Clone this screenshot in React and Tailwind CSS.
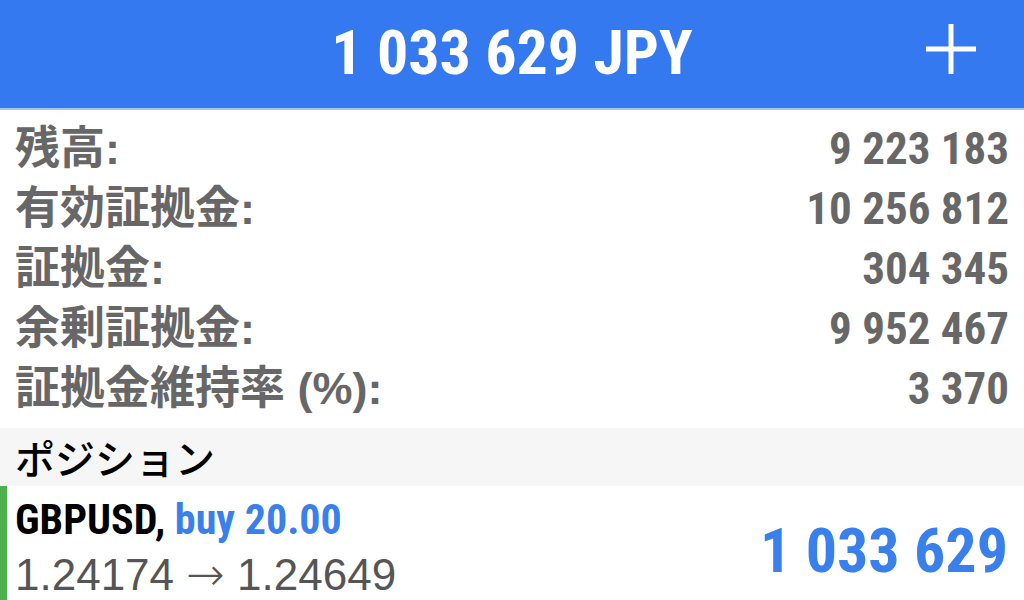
const rows = [
  { label: '残高:', value: '9 223 183' },
  { label: '有効証拠金:', value: '10 256 812' },
  { label: '証拠金:', value: '304 345' },
  { label: '余剰証拠金:', value: '9 952 467' },
  { label: '証拠金維持率 (%):', value: '3 370' },
];

const narrow = "font-['Roboto','Open_Sans',sans-serif] font-stretch-condensed";

function PlusIcon() {
  return (
    <svg width="54" height="54" viewBox="0 0 54 54" className="block">
      <line x1="27" y1="2" x2="27" y2="52" stroke="white" strokeWidth="5" />
      <line x1="2" y1="27" x2="52" y2="27" stroke="white" strokeWidth="5" />
    </svg>
  );
}

export default function App() {
  return (
    <div className="w-[1024px] h-[600px] overflow-hidden bg-white font-['Liberation_Sans','Noto_Sans_CJK_JP',sans-serif]">
      <header className="h-[110px] bg-[#3579f0] border-b-2 border-[#a9c3ef] grid grid-cols-[1fr_auto_1fr] items-center">
        <div />
        <h1 className={`${narrow} text-white font-bold text-[62px] leading-none pb-[2px]`}>1 033 629 JPY</h1>
        <div className="flex justify-end pr-[46px] pb-[10px]">
          <PlusIcon />
        </div>
      </header>

      <div className="pt-[8px] pb-[10px]">
        {rows.map((r) => (
          <div key={r.label} className="h-[60px] flex items-center justify-between pl-[15px] pr-[15px]">
            <span className="text-[45px] leading-none font-bold text-[#676767]">{r.label}</span>
            <span className={`${narrow} text-[45px] leading-none font-bold text-[#676767]`}>{r.value}</span>
          </div>
        ))}
      </div>

      <div className="h-[58px] bg-[#f6f6f6] flex items-center pl-[15px]">
        <span className="text-[40px] leading-none text-black font-['Noto_Sans_CJK_JP',sans-serif] font-medium">ポジション</span>
      </div>

      <div className="border-l-[7px] border-[#4caf50] h-[120px] flex items-center justify-between pl-[8px] pr-[16px]">
        <div className="flex flex-col gap-[10px] pt-[4px]">
          <div className={`${narrow} text-[42px] leading-none font-bold text-black`}>
            GBPUSD, <span className="text-[#3a80ec]">buy 20.00</span>
          </div>
          <div className="text-[44px] leading-none text-[#555555]">
            1.24174 <span className="font-['DejaVu_Sans',sans-serif] font-extralight text-[46px]">→</span> 1.24649
          </div>
        </div>
        <div className={`${narrow} text-[62px] leading-none font-bold text-[#3a80ec] pt-[10px]`}>1 033 629</div>
      </div>
    </div>
  );
}
